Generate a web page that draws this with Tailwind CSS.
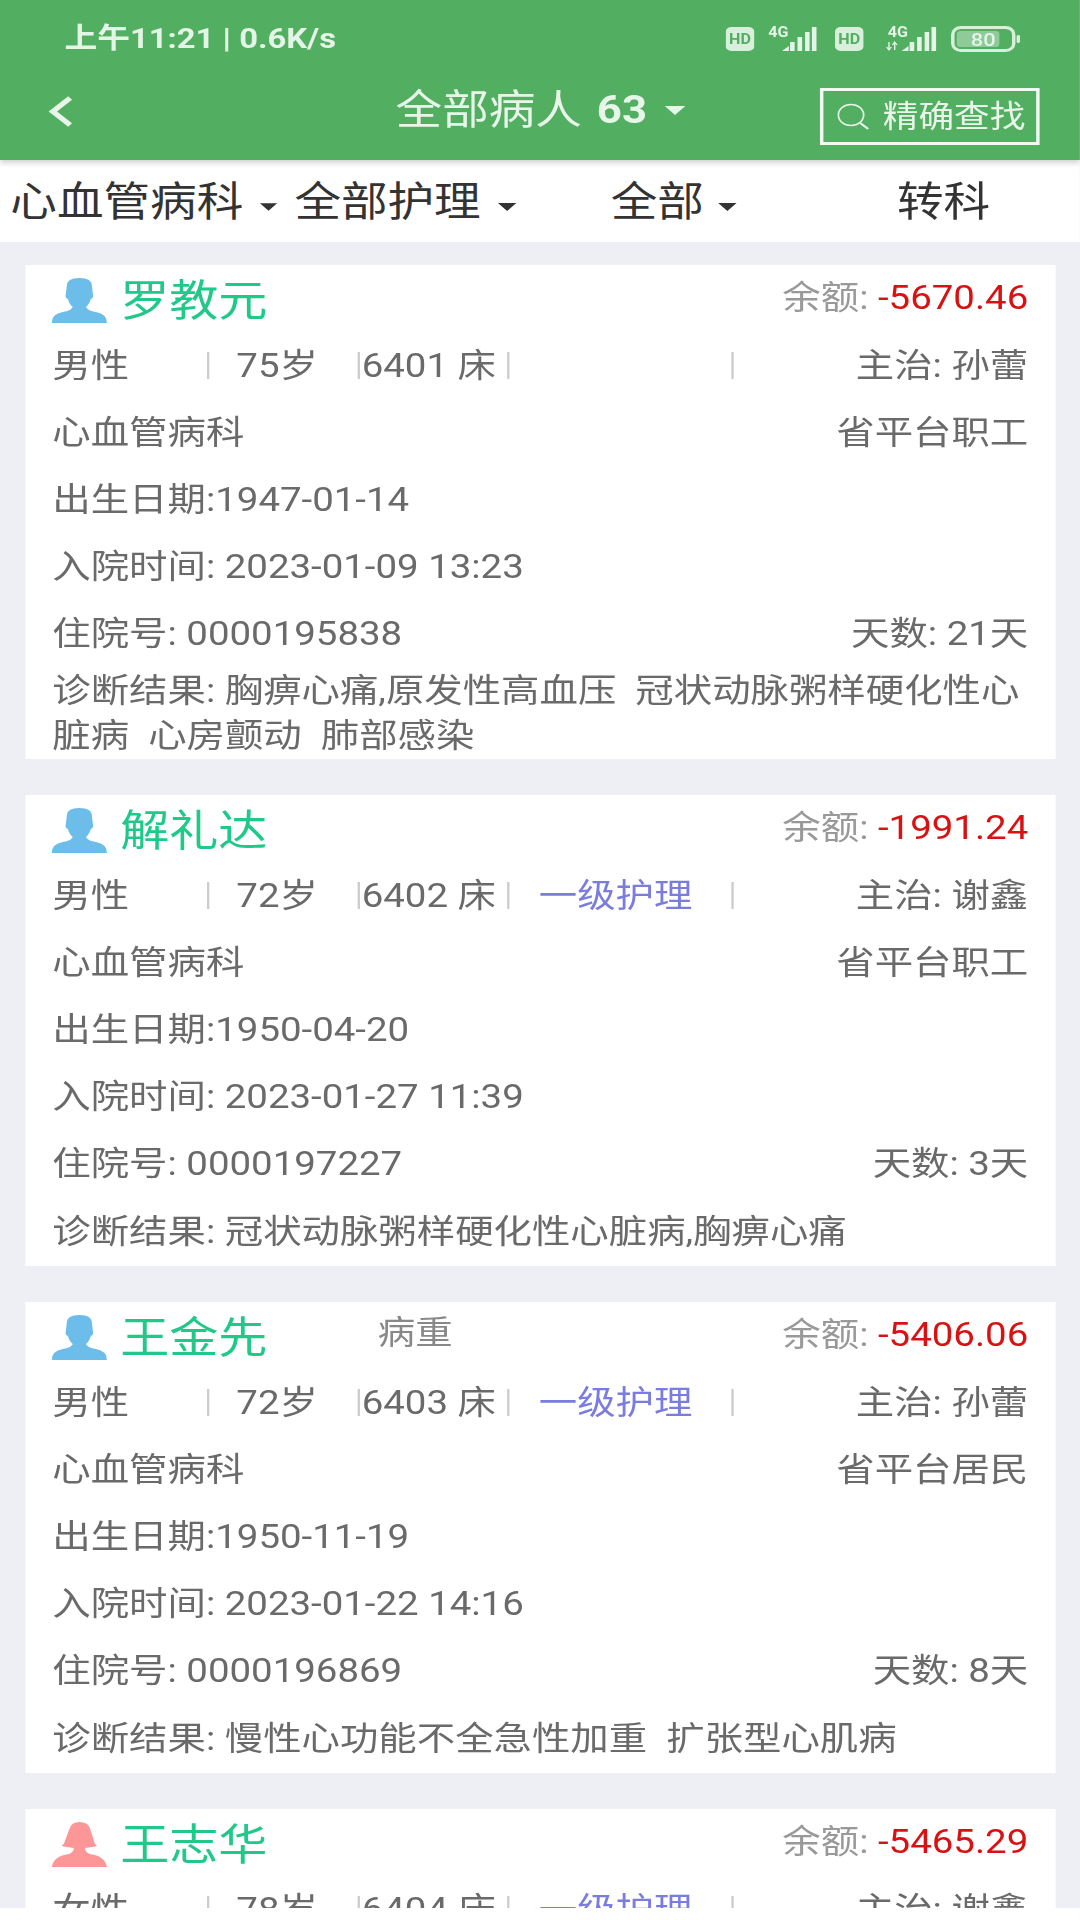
<!DOCTYPE html>
<html lang="zh-CN">

<head>
  <meta charset="UTF-8" />
  <meta name="viewport" content="width=device-width, initial-scale=1.0" />
  <title>全部病人</title>
  <script src="https://cdn.jsdelivr.net/npm/@tailwindcss/browser@4"></script>
</head>

<body class="bg-[#eeeff4] overflow-hidden [font-family:Roboto,'Noto_Sans_CJK_SC',sans-serif]">

  <!-- the screenshot is stretched sideways, so everything sits in one wrapper -->
  <div class="w-[939.13px] h-[1920px] origin-top-left scale-x-[1.15] flex flex-col overflow-hidden">

    <!-- Header -->
    <header class="relative z-10 h-[160px] shrink-0 bg-[#52ae60] shadow-[0_3px_5px_rgba(0,0,0,0.18)]">
      <div class="h-[78px] flex items-center pl-[56px] pr-[52px] justify-between text-[#e4f4e6]">
        <span class="text-[28.5px] font-bold whitespace-pre">上午11:21<span class="font-black"> | </span>0.6K/s</span>
        <div class="flex items-center">
          <svg class="w-[25px] h-[24px]" viewBox="0 0 25 24">
            <rect width="25" height="24" rx="5" fill="#d8efdb" />
            <text x="12.5" y="17" text-anchor="middle" font-size="14" font-weight="700" fill="#52ae60">HD</text>
          </svg>
          <svg class="w-[48px] h-[28px] ml-[12px]" viewBox="0 0 48 28">
            <text x="0" y="12" font-size="14" font-weight="700" fill="#e4f4e6">4G</text>
            <path d="M12 26 L18 26 L18 21 Z" fill="#e4f4e6" />
            <path d="M21 26V17M27.5 26V12M34 26V7M40 26V2" stroke="#e4f4e6" stroke-width="4" fill="none" />
          </svg>
          <svg class="w-[25px] h-[24px] ml-[10px]" viewBox="0 0 25 24">
            <rect width="25" height="24" rx="5" fill="#d8efdb" />
            <text x="12.5" y="17" text-anchor="middle" font-size="14" font-weight="700" fill="#52ae60">HD</text>
          </svg>
          <svg class="w-[50px] h-[28px] ml-[19px]" viewBox="0 0 50 28">
            <text x="2" y="12" font-size="14" font-weight="700" fill="#e4f4e6">4G</text>
            <path d="M3 17V25M8 17V25M1 22L3 25L5 22M6 20L8 17L10 20" stroke="#e4f4e6" stroke-width="1.2" fill="none" />
            <path d="M14 26 L20 26 L20 21 Z" fill="#e4f4e6" />
            <path d="M23 26V17M29.5 26V12M36 26V7M42 26V2" stroke="#e4f4e6" stroke-width="4" fill="none" />
          </svg>
          <svg class="w-[60px] h-[26px] ml-[7px]" viewBox="0 0 60 26">
            <rect x="1.5" y="1.5" width="53" height="23" rx="7" fill="none" stroke="#d8efdb" stroke-width="3" />
            <rect x="5" y="5" width="37" height="16" rx="3" fill="#8fcb99" />
            <text x="28" y="20" text-anchor="middle" font-size="19" font-weight="500" fill="#e4f4e6">80</text>
            <rect x="57" y="9" width="3" height="8" rx="1.5" fill="#d8efdb" />
          </svg>
        </div>
      </div>
      <div class="h-[82px] flex items-start pl-[42px] text-[#e8f6ea]">
        <svg class="w-[22px] h-[33px] mt-[17px]" viewBox="0 0 22 33">
          <path d="M19 3 L4 16.5 L19 30" fill="none" stroke="#e8f6ea" stroke-width="5" />
        </svg>
        <div class="flex items-center ml-[280px] mt-[7px] h-[50px] text-[40.5px] leading-[50px]">
          <span>全部病人</span>
          <span class="font-bold text-[38px] ml-[13px]">63</span>
          <svg class="w-[18px] h-[9px] ml-[15px]" viewBox="0 0 18 9"><polygon points="0,0 18,0 9,9" fill="#e8f6ea" /></svg>
        </div>
        <div class="ml-[117px] mt-[10px] w-[191px] h-[57px] border-[3px] border-[#f2faf3] flex items-center pl-[12px] gap-[12px]">
          <svg class="w-[28px] h-[27px]" viewBox="0 0 28 27">
            <ellipse cx="12" cy="12" rx="11" ry="10.5" fill="none" stroke="#e8f6ea" stroke-width="1.5" />
            <path d="M20 20 L27 26" stroke="#e8f6ea" stroke-width="2" />
          </svg>
          <span class="text-[31px] leading-none whitespace-nowrap">精确查找</span>
        </div>
      </div>
    </header>

    <!-- Filters -->
    <nav class="h-[82px] shrink-0 bg-white flex items-center pl-[9px] pt-[3px] text-[40.5px] text-[#333]">
      <span class="w-[203px]">心血管病科</span>
      <svg class="w-[15px] h-[8px] ml-[14px] mt-[8px]" viewBox="0 0 18 9"><polygon points="0,0 18,0 9,9" fill="#333" /></svg>
      <span class="w-[162px] ml-[15px]">全部护理</span>
      <svg class="w-[18px] h-[8px] ml-[14px] mt-[8px]" viewBox="0 0 18 9"><polygon points="0,0 18,0 9,9" fill="#333" /></svg>
      <span class="w-[81px] ml-[81px]">全部</span>
      <svg class="w-[19px] h-[8px] ml-[11px] mt-[8px]" viewBox="0 0 18 9"><polygon points="0,0 18,0 9,9" fill="#333" /></svg>
      <span class="w-[81px] ml-[138px]">转科</span>
    </nav>

    <!-- Patients -->
    <main id="list" class="flex-1 min-h-0 overflow-hidden pt-[23px] pl-[21.5px] pr-[21px] flex flex-col gap-[36px]"></main>

    <div class="h-[12px] shrink-0 bg-white"></div>
  </div>

  <script>
    const patients = [
      { name: "罗教元", balance: "-5670.46", sex: "男性", age: "75岁", bed: "6401 床", care: "", doctor: "孙蕾", dept: "心血管病科", insurance: "省平台职工", birth: "1947-01-14", admitted: "2023-01-09 13:23", no: "0000195838", days: "21天", diagnosis: "胸痹心痛,原发性高血压  冠状动脉粥样硬化性心脏病  心房颤动  肺部感染" },
      { name: "解礼达", balance: "-1991.24", sex: "男性", age: "72岁", bed: "6402 床", care: "一级护理", doctor: "谢鑫", dept: "心血管病科", insurance: "省平台职工", birth: "1950-04-20", admitted: "2023-01-27 11:39", no: "0000197227", days: "3天", diagnosis: "冠状动脉粥样硬化性心脏病,胸痹心痛" },
      { name: "王金先", flag: "病重", balance: "-5406.06", sex: "男性", age: "72岁", bed: "6403 床", care: "一级护理", doctor: "孙蕾", dept: "心血管病科", insurance: "省平台居民", birth: "1950-11-19", admitted: "2023-01-22 14:16", no: "0000196869", days: "8天", diagnosis: "慢性心功能不全急性加重  扩张型心肌病" },
      { name: "王志华", balance: "-5465.29", sex: "女性", age: "78岁", bed: "6404 床", care: "一级护理", doctor: "谢鑫", dept: "心血管病科", insurance: "省平台居民", birth: "1945-03-02", admitted: "2023-01-20 09:30", no: "0000196500", days: "10天", diagnosis: "胸痹心痛" }
    ];

    const maleIcon = `<path d="M15 8 Q15 0 27.5 0 Q40 0 40 8 L41 16 Q42 20 39 21 Q37 27 34 29 Q36 33 44 34 Q55 36 55 45 L0 45 Q0 36 11 34 Q19 33 21 29 Q18 27 16 21 Q13 20 14 16 Z" fill="#6cbde9" />`;
    const femaleIcon = `<path d="M18 6 Q20 0 27.5 0 Q36 0 38 6 L43 22 Q48 24 40 25 L33 26 Q33 30 38 32 Q53 34 55 45 L0 45 Q2 34 17 32 Q22 30 22 26 L15 25 Q7 24 12 22 Z" fill="#fd9696" />`;

    const sep = `<i class="block w-[2px] h-[27px] bg-[#ccc] shrink-0"></i>`;

    const createCard = (p) => `
      <section class="bg-white shrink-0 pl-[24px] pr-[24px] text-[33.4px] text-[#6a6a6a] leading-none">
        <div class="relative h-[67px] flex items-center justify-between">
          <div class="flex items-center pt-[4px]">
            <svg class="w-[48px] h-[45px] -ml-[1px]" viewBox="0 0 55 45" preserveAspectRatio="none">${p.sex === "女性" ? femaleIcon : maleIcon}</svg>
            <span class="ml-[12px] text-[42.7px] text-[#20c98a] pt-[2px]">${p.name}</span>
          </div>
          ${p.flag ? `<span class="absolute left-[283px] top-[15px] text-[#888] text-[32.5px]">${p.flag}</span>` : ""}
          <div class="-mt-[2px] whitespace-nowrap"><span class="text-[#999]">余额:</span> <span class="text-[#d81212]">${p.balance}</span></div>
        </div>
        <div class="h-[67px] flex items-center whitespace-nowrap">
          <span class="w-[134px]">${p.sex}</span>${sep}
          <span class="w-[129px] pl-[24px]">${p.age}</span>${sep}
          <span class="w-[128px] pl-[2px]">${p.bed}</span>${sep}
          <span class="w-[193px] pl-[26px] text-[#7a7ce0]">${p.care}</span>${sep}
          <span class="ml-auto">主治: ${p.doctor}</span>
        </div>
        <div class="h-[67px] flex items-center justify-between"><span>${p.dept}</span><span>${p.insurance}</span></div>
        <div class="h-[67px] flex items-center">出生日期:${p.birth}</div>
        <div class="h-[67px] flex items-center">入院时间: ${p.admitted}</div>
        <div class="h-[67px] flex items-center justify-between"><span>住院号: ${p.no}</span><span>天数: ${p.days}</span></div>
        <div class="min-h-[69px] flex items-center py-[1px]"><p class="leading-[45px] whitespace-pre-wrap">诊断结果: ${p.diagnosis}</p></div>
      </section>`;

    document.getElementById("list").innerHTML = patients.map(createCard).join("");
  </script>
</body>

</html>
